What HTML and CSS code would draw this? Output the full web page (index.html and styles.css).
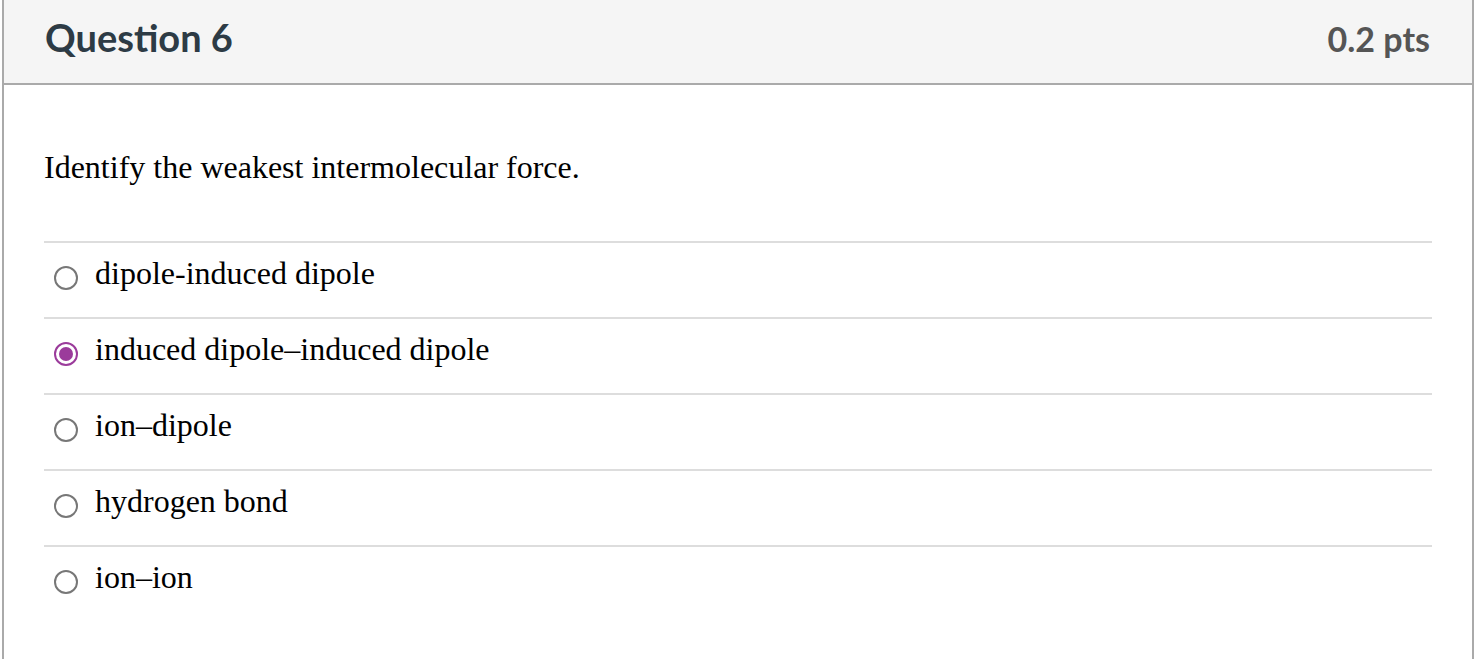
FILE: index.html
```html
<!DOCTYPE html>
<html lang="en">
<head>
<meta charset="utf-8">
<title>Question 6</title>
<link rel="stylesheet" href="styles.css">
</head>
<body>
<div class="question">
  <div class="question-header">
    <h2 class="question-title">Question 6</h2>
    <span class="question-points">0.2 pts</span>
  </div>
  <div class="question-body">
    <p class="question-text">Identify the weakest intermolecular force.</p>
    <div class="answers">
      <label class="answer"><span class="radio"></span><span class="answer-text">dipole-induced dipole</span></label>
      <label class="answer"><span class="radio checked"></span><span class="answer-text">induced dipole–induced dipole</span></label>
      <label class="answer"><span class="radio"></span><span class="answer-text">ion–dipole</span></label>
      <label class="answer"><span class="radio"></span><span class="answer-text">hydrogen bond</span></label>
      <label class="answer"><span class="radio"></span><span class="answer-text">ion–ion</span></label>
    </div>
  </div>
</div>
</body>
</html>
```
FILE: styles.css
```css
html, body {
  margin: 0;
  padding: 0;
  background: #ffffff;
}

.question {
  margin-left: 2px;
  width: 1472px;
  box-sizing: border-box;
  border-left: 2px solid #aaaaaa;
  border-right: 2px solid #aaaaaa;
  min-height: 659px;
}

.question-header {
  height: 83px;
  box-sizing: border-box;
  background: #f5f5f5;
  border-bottom: 2px solid #aaaaaa;
  display: flex;
  align-items: baseline;
  justify-content: space-between;
  padding: 14px 42px 0 41px;
  height: 85px;
}

.question-title {
  margin: 0;
  font-family: Lato, "Open Sans", sans-serif;
  font-weight: 700;
  font-size: 38px;
  line-height: 46px;
  color: #2d3b45;
}

.question-points {
  font-family: Lato, "Open Sans", sans-serif;
  font-weight: 700;
  font-size: 34px;
  line-height: 46px;
  color: #555555;
}

.question-body {
  padding: 61px 40px 0 40px;
}

.question-text {
  margin: 0 0 53px 0;
  font-family: "Liberation Serif", "Times New Roman", serif;
  font-size: 32px;
  line-height: 42px;
  color: #000000;
}

.answers {
  display: flex;
  flex-direction: column;
}

.answer {
  display: flex;
  align-items: flex-start;
  height: 76px;
  box-sizing: border-box;
  border-top: 2px solid #dddddd;
  padding: 9px 0 0 10px;
}

.radio {
  width: 24px;
  height: 24px;
  box-sizing: border-box;
  border: 2px solid #777777;
  border-radius: 50%;
  margin: 14px 17px 0 0;
  flex: none;
  display: flex;
  align-items: center;
  justify-content: center;
}

.radio.checked {
  border-color: #9b3b9b;
}

.radio.checked::after {
  content: "";
  width: 14px;
  height: 14px;
  border-radius: 50%;
  background: #9b3b9b;
}

.answer-text {
  font-family: "Liberation Serif", "Times New Roman", serif;
  font-size: 32px;
  line-height: 42px;
  color: #000000;
}
```
